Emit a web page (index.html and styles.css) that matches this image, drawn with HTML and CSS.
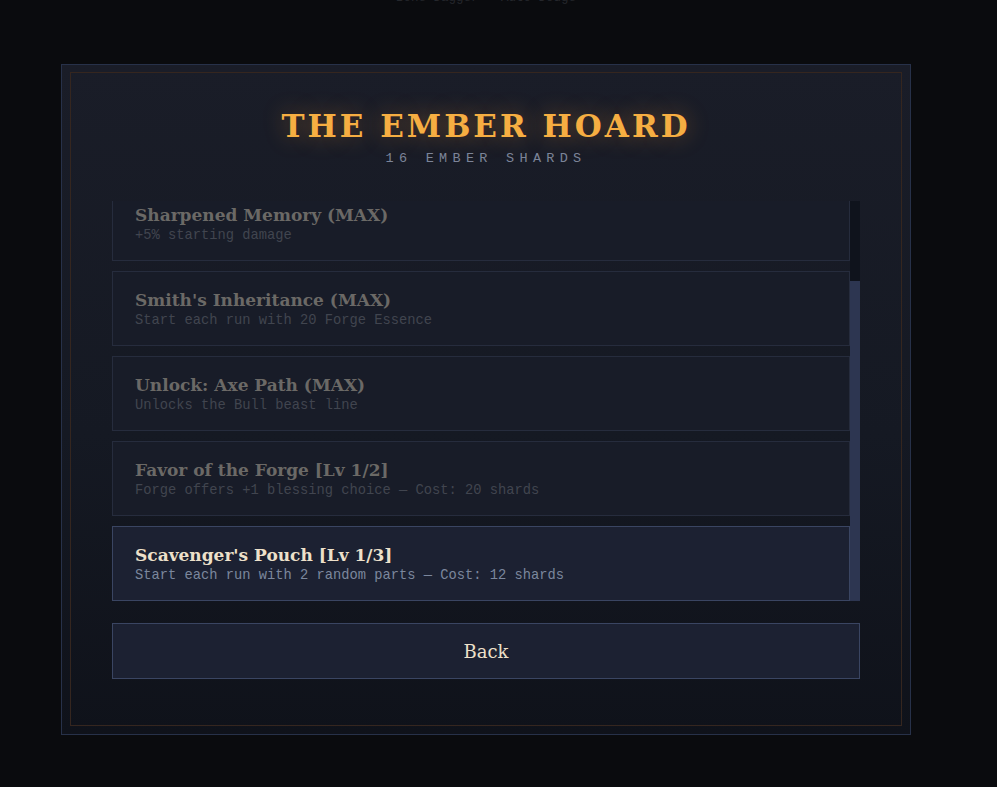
FILE: index.html
```html
<!DOCTYPE html>
<html lang="en">
<head>
    <meta charset="UTF-8">
    <meta name="viewport" content="width=device-width, initial-scale=1.0">
    <title>The Ember Hoard</title>
    <link rel="stylesheet" href="styles.css">
</head>
<body>
    <div class="run-status">Bone Dagger · Auto-Dodge</div>

    <div class="hoard-modal">
        <div class="hoard-inner">
            <h1 class="hoard-title">THE EMBER HOARD</h1>
            <div class="hoard-shards">16 EMBER SHARDS</div>

            <div class="list-frame">
                <div class="upgrade-list" id="upgrade-list">
                    <div class="upgrade maxed">
                        <h3>Tempered Grip (MAX)</h3>
                        <p>+10% attack speed</p>
                    </div>
                    <div class="upgrade maxed">
                        <h3>Sharpened Memory (MAX)</h3>
                        <p>+5% starting damage</p>
                    </div>
                    <div class="upgrade maxed">
                        <h3>Smith's Inheritance (MAX)</h3>
                        <p>Start each run with 20 Forge Essence</p>
                    </div>
                    <div class="upgrade maxed">
                        <h3>Unlock: Axe Path (MAX)</h3>
                        <p>Unlocks the Bull beast line</p>
                    </div>
                    <div class="upgrade locked">
                        <h3>Favor of the Forge [Lv 1/2]</h3>
                        <p>Forge offers +1 blessing choice — Cost: 20 shards</p>
                    </div>
                    <div class="upgrade">
                        <h3>Scavenger's Pouch [Lv 1/3]</h3>
                        <p>Start each run with 2 random parts — Cost: 12 shards</p>
                    </div>
                </div>
                <div class="scroll-track" id="scroll-track">
                    <div class="scroll-thumb" id="scroll-thumb"></div>
                </div>
            </div>

            <button class="back-btn">Back</button>
        </div>
    </div>

    <script>
        const list = document.getElementById('upgrade-list');
        const track = document.getElementById('scroll-track');
        const thumb = document.getElementById('scroll-thumb');

        list.scrollTop = list.scrollHeight;

        // custom scrollbar, sized from the list's scroll state
        const ratio = list.clientHeight / list.scrollHeight;
        const trackH = track.clientHeight;
        thumb.style.height = Math.round(trackH * ratio) + 'px';
        thumb.style.marginTop = Math.round(trackH * list.scrollTop / list.scrollHeight) + 'px';
    </script>
</body>
</html>
```

FILE: styles.css
```css
:root {
    --ember: #f6ae42;
    --cream: #ede0ca;
    --muted: #7b879d;
    --card: #1c2132;
    --card-border: #3a4562;
    --serif: "DejaVu Serif", Georgia, serif;
    --mono: "Liberation Mono", "Courier New", monospace;
}

* {
    box-sizing: border-box;
    margin: 0;
    padding: 0;
}

body {
    background: #0a0b0e;
    min-height: 100vh;
    overflow: hidden;
    font-family: var(--serif);
}

.run-status {
    margin-top: -9px;
    margin-left: 61px;
    width: 850px;
    height: 73px;
    text-align: center;
    font-family: var(--mono);
    font-size: 12.5px;
    color: #25272c;
}

.hoard-modal {
    margin-left: 61px;
    width: 850px;
    height: 671px;
    padding: 7px 8px 8px;
    border: 1px solid #273149;
    background: linear-gradient(180deg, #1a1d28 0%, #151923 55%, #0f121a 100%);
}

.hoard-inner {
    height: 100%;
    border: 1px solid #35261f;
    padding: 35px 41px 0;
}

.hoard-title {
    text-align: center;
    font-size: 31px;
    font-weight: bold;
    letter-spacing: 3px;
    line-height: 36px;
    color: var(--ember);
    text-shadow: 0 0 22px rgba(246, 150, 50, 0.4);
}

.hoard-shards {
    margin-top: 7px;
    text-align: center;
    font-family: var(--mono);
    font-size: 13.5px;
    letter-spacing: 5.3px;
    color: #7c8498;
}

.list-frame {
    display: flex;
    margin-top: 35px;
    height: 400px;
}

.upgrade-list {
    flex: 1;
    overflow: hidden;
    display: flex;
    flex-direction: column;
    gap: 10px;
}

.scroll-track {
    width: 10px;
    background: #0f131c;
}

.scroll-thumb {
    background: #2d3651;
}

.upgrade {
    flex-shrink: 0;
    padding: 16px 22px 15px;
    background: var(--card);
    border: 1px solid var(--card-border);
}

.upgrade h3 {
    font-size: 17px;
    font-weight: bold;
    line-height: 24px;
    color: var(--cream);
}

.upgrade p {
    font-family: var(--mono);
    font-size: 13.75px;
    line-height: 18px;
    color: var(--muted);
}

.upgrade.maxed,
.upgrade.locked {
    background: #181c28;
    border-color: #262c3d;
}

.upgrade.maxed h3,
.upgrade.locked h3 {
    color: #6b6966;
}

.upgrade.maxed p,
.upgrade.locked p {
    color: #41454f;
}

.back-btn {
    display: block;
    width: 100%;
    height: 56px;
    margin-top: 22px;
    background: var(--card);
    border: 1px solid var(--card-border);
    color: var(--cream);
    font-family: var(--serif);
    font-size: 18px;
}
```
